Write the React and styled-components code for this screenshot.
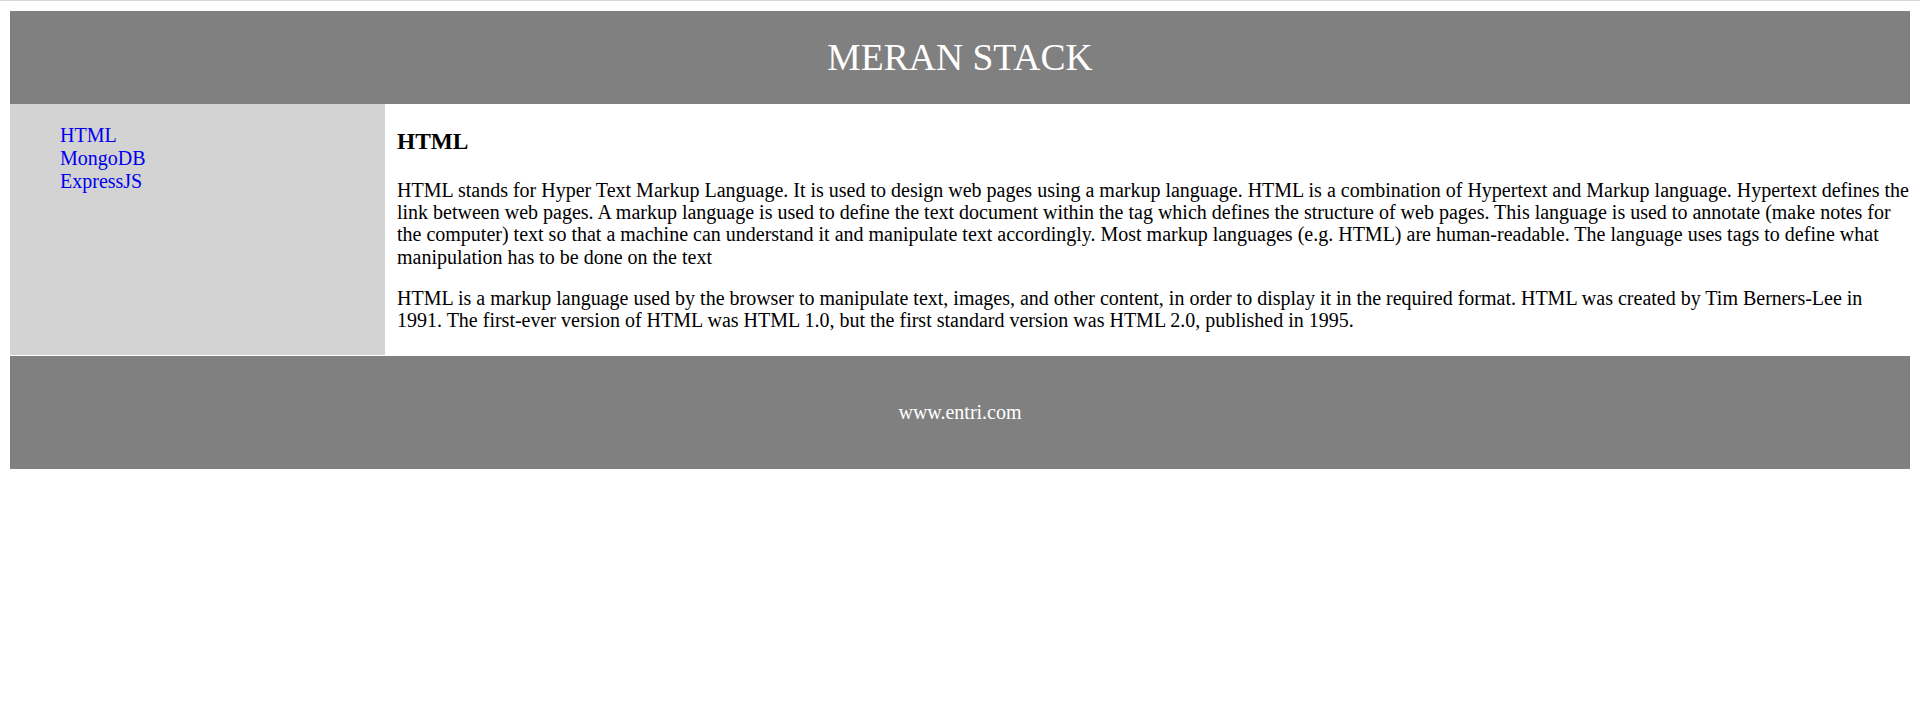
import React from "react";
import styled, { createGlobalStyle } from "styled-components";

const GlobalStyle = createGlobalStyle`
  html {
    border-top: 1px solid #d6d6d6;
    background: #ffffff;
  }
  body {
    margin: 10px;
    font-family: "Liberation Serif", "Times New Roman", serif;
    color: #000000;
  }
`;

const Page = styled.div`
  display: flex;
  flex-direction: column;
  width: 1900px;
`;

const Header = styled.header`
  height: 93px;
  background: #808080;
  display: flex;
  align-items: center;
  justify-content: center;
`;

const Title = styled.h1`
  margin: 0;
  font-size: 37.6px;
  font-weight: normal;
  color: #ffffff;
  line-height: 42px;
`;

const Main = styled.div`
  display: grid;
  grid-template-columns: 375px 1fr;
  height: 251px;
`;

const Sidebar = styled.nav`
  background: #d3d3d3;
`;

const NavList = styled.ul`
  list-style: none;
  margin: 20px 0;
  padding: 0 0 0 50px;
  font-size: 20px;
  line-height: 23px;
`;

const NavLink = styled.a`
  color: #0000ee;
  text-decoration: none;
`;

const Content = styled.section`
  padding: 0 0 0 12px;
  background: #ffffff;
  overflow: hidden;
`;

const Heading = styled.h3`
  margin: 24px 0 25px;
  font-size: 23.4px;
  line-height: 26px;
  font-weight: bold;
`;

const Paragraph = styled.p`
  margin: 0 0 19px;
  font-size: 20px;
  line-height: 22.2px;
`;

const Footer = styled.footer`
  margin-top: 1px;
  height: 113px;
  background: #808080;
  display: flex;
  align-items: center;
  justify-content: center;
  color: #ffffff;
  font-size: 20px;
`;

const links = ["HTML", "MongoDB", "ExpressJS"];

export default function App() {
  return (
    <>
      <GlobalStyle />
      <Page>
        <Header>
          <Title>MERAN STACK</Title>
        </Header>
        <Main>
          <Sidebar>
            <NavList>
              {links.map((l) => (
                <li key={l}>
                  <NavLink href="#">{l}</NavLink>
                </li>
              ))}
            </NavList>
          </Sidebar>
          <Content>
            <Heading>HTML</Heading>
            <Paragraph>
              HTML stands for Hyper Text Markup Language. It is used to design web pages using a markup language. HTML is a combination of Hypertext and Markup language. Hypertext defines the link between web pages. A markup language is used to define the text document within the tag which defines the structure of web pages. This language is used to annotate (make notes for the computer) text so that a machine can understand it and manipulate text accordingly. Most markup languages (e.g. HTML) are human-readable. The language uses tags to define what manipulation has to be done on the text
            </Paragraph>
            <Paragraph>
              HTML is a markup language used by the browser to manipulate text, images, and other content, in order to display it in the required format. HTML was created by Tim Berners-Lee in 1991. The first-ever version of HTML was HTML 1.0, but the first standard version was HTML 2.0, published in 1995.
            </Paragraph>
          </Content>
        </Main>
        <Footer>www.entri.com</Footer>
      </Page>
    </>
  );
}
